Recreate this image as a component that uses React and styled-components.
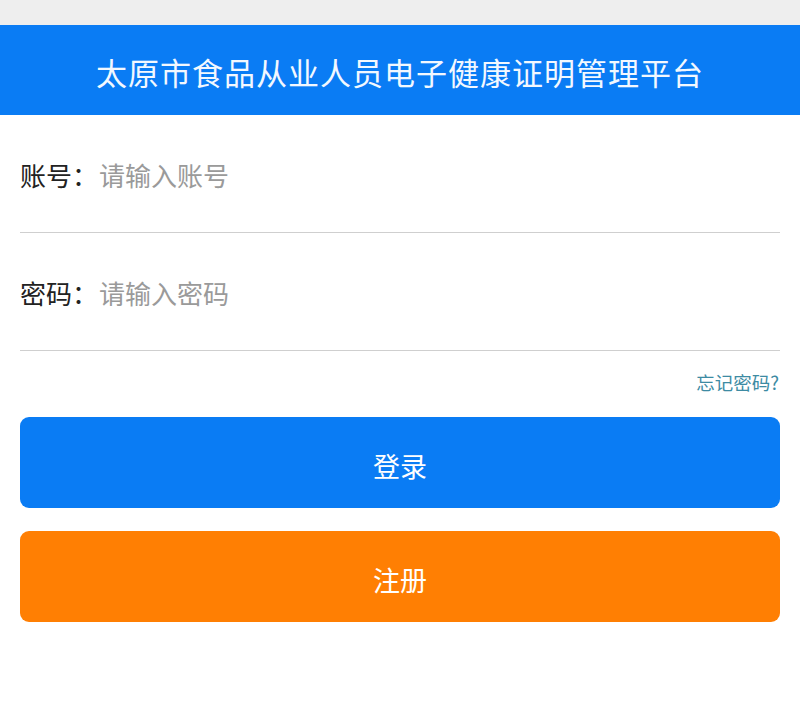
import React from 'react';
import styled, { createGlobalStyle } from 'styled-components';

const GlobalStyle = createGlobalStyle`
    html, body {
        margin: 0;
        padding: 0;
        background: #ffffff;
        font-family: "Noto Sans CJK SC", "Noto Sans", sans-serif;
    }
`

const App = () => {
    return (
        <Page>
            <GlobalStyle />
            <StatusStrip />
            <Header>太原市食品从业人员电子健康证明管理平台</Header>
            <Form>
                <Field>
                    <Label>账号：</Label>
                    <Input type="text" placeholder="请输入账号" />
                </Field>
                <Field>
                    <Label>密码：</Label>
                    <Input type="password" placeholder="请输入密码" />
                </Field>
                <Forgot>忘记密码?</Forgot>
                <Button color="#0a7cf4">登录</Button>
                <Button color="#ff7f03">注册</Button>
            </Form>
        </Page>
    );
};

export default App;

const Page = styled.div`
    width: 800px;
    min-height: 707px;
    background: #ffffff;
`
const StatusStrip = styled.div`
    height: 25px;
    background: #eeeeee;
`
const Header = styled.div`
    height: 90px;
    background: #0a7cf4;
    color: #f2f8ff;
    font-size: 31px;
    letter-spacing: 1px;
    display: flex;
    align-items: center;
    justify-content: center;
    padding-top: 2px;
    box-sizing: border-box;
`
const Form = styled.div`
    padding: 0 20px;
    display: flex;
    flex-direction: column;
`
const Field = styled.div`
    height: 118px;
    display: flex;
    align-items: center;
    border-bottom: 1.5px solid #cfcfcf;
    box-sizing: border-box;
    padding-top: 2px;
`
const Label = styled.span`
    font-size: 26px;
    color: #222222;
    white-space: nowrap;
`
const Input = styled.input`
    flex: 1;
    border: none;
    outline: none;
    background: transparent;
    font-family: inherit;
    font-size: 26px;
    color: #333333;
    padding: 0 0 0 1px;
    &::placeholder {
        color: #9a9a9a;
    }
`
const Forgot = styled.div`
    align-self: flex-end;
    margin-top: 19px;
    margin-right: 1px;
    font-size: 18.5px;
    color: #3d8ba3;
    line-height: 24px;
`
const Button = styled.div`
    margin-top: 23px;
    height: 91px;
    border-radius: 9px;
    background: ${props => props.color};
    color: #ffffff;
    font-size: 27px;
    display: flex;
    align-items: center;
    justify-content: center;
    padding-top: 5px;
    box-sizing: border-box;
    & + & {
        margin-top: 23px;
    }
`
